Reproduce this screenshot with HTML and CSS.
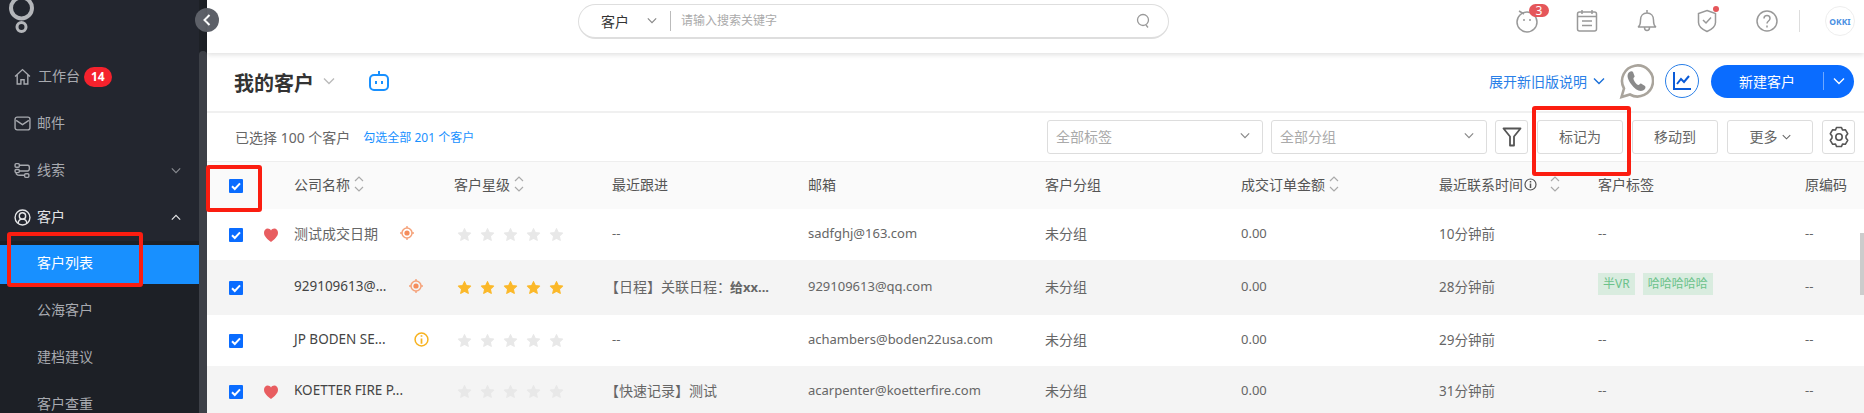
FILE: index.html
```html
<!DOCTYPE html>
<html lang="zh-CN">
<head>
  <meta charset="UTF-8" />
  <title>我的客户</title>
  <meta name="viewport" content="width=device-width, initial-scale=1.0" />
  <link rel="stylesheet" href="styles.css">
</head>
<body>
  <svg class="sprite" aria-hidden="true">
    <symbol id="i-check" viewBox="0 0 14 14">
      <rect width="14" height="14" rx="1" fill="#0a6cff" />
      <path d="M3 7.2l2.8 2.8L11 4.4" fill="none" stroke="#fff" stroke-width="2" />
    </symbol>
    <symbol id="i-star" viewBox="0 0 14 14">
      <path d="M7 1.500l1.700 3.700 4 .5-3 2.800.8 4L7 10.500l-3.500 2 .8-4-3-2.800 4-.5z" stroke-linejoin="round" />
    </symbol>
    <symbol id="i-heart" viewBox="0 0 14 14">
      <path d="M7 14C3.600 11.200 0 8.500 0 4.700 0 2.300 1.700.6 3.700.6 5.100.6 6.300 1.300 7 2.400 7.700 1.300 8.900.6 10.300.6c2 0 3.700 1.700 3.700 4.100 0 3.800-3.600 6.500-7 9.300z" fill="#e85d60" />
    </symbol>
    <symbol id="i-target" viewBox="0 0 14 14">
      <circle cx="7" cy="7" r="5" fill="none" stroke="#f5a27a" stroke-width="1.500" />
      <circle cx="7" cy="7" r="2.600" fill="#f58d5c" />
      <path d="M7 0v2M7 12v2M0 7h2M12 7h2" stroke="#f5a27a" stroke-width="1.400" />
    </symbol>
    <symbol id="i-sort" viewBox="0 0 10 18">
      <path d="M1 6l4-4 4 4M1 12l4 4 4-4" fill="none" stroke="#aaa" stroke-width="1.200" />
    </symbol>
    <symbol id="i-down" viewBox="0 0 12 8">
      <path d="M1 1.500l5 5 5-5" fill="none" stroke="currentColor" stroke-width="1.400" />
    </symbol>
  </svg>

  <div class="app">
    <aside class="sidebar">
      <nav class="nav">
        <div class="logo">
          <svg width="30" height="36" viewBox="0 0 30 36">
            <circle cx="14.500" cy="8" r="10.500" fill="none" stroke="#b4b6ba" stroke-width="4" />
            <circle cx="14.500" cy="27" r="4.500" fill="#23262f" stroke="#b4b6ba" stroke-width="3" />
          </svg>
        </div>
        <a class="nav-item">
          <svg class="nav-icon" viewBox="0 0 16 16"><path d="M1 8l7-6.500L15 8M3 6.500V15h3.500v-4h3v4H13V6.500" /></svg>
          <span class="nav-text nav-text-first">工作台</span>
          <span class="nav-badge">14</span>
        </a>
        <a class="nav-item">
          <svg class="nav-icon" viewBox="0 0 16 16"><rect x="1" y="2" width="14" height="12" rx="2" /><path d="M2 5l6 4 6-4" /></svg>
          <span class="nav-text">邮件</span>
        </a>
        <a class="nav-item">
          <svg class="nav-icon" viewBox="0 0 16 16"><rect x="1" y="1.500" width="4" height="3.500" rx="1" /><rect x="1" y="7" width="4" height="3" rx="1" /><rect x="10" y="11" width="4" height="3.500" rx="1" /><path d="M5 3h8c2 0 2 5 0 5.500H5M10 12.500H5c-2 0-3-1-3-2.500" /></svg>
          <span class="nav-text">线索</span>
          <svg class="nav-arrow"><use href="#i-down" /></svg>
        </a>
        <a class="nav-item nav-item-open">
          <svg class="nav-icon" viewBox="0 0 16 16"><circle cx="8" cy="8" r="7" /><circle cx="8" cy="6.500" r="3" /><path d="M4 13.500c0-3 1.500-4 4-4s4 1 4 4" /></svg>
          <span class="nav-text">客户</span>
          <svg class="nav-arrow nav-arrow-up"><use href="#i-down" /></svg>
        </a>
        <div class="subnav">
          <a class="sub-item sub-item-active">客户列表</a>
          <a class="sub-item">公海客户</a>
          <a class="sub-item">建档建议</a>
          <a class="sub-item">客户查重</a>
        </div>
      </nav>
      <div class="side-scroll"><div class="side-thumb"></div></div>
      <button class="collapse-btn">
        <svg width="8" height="12" viewBox="0 0 8 12"><path d="M6.500 1L1.500 6l5 5" fill="none" stroke="#fff" stroke-width="2" /></svg>
      </button>
    </aside>

    <main class="main">
      <header class="topbar">
        <div class="search">
          <span class="search-type">客户</span>
          <svg class="search-arrow"><use href="#i-down" /></svg>
          <span class="search-input">请输入搜索关键字</span>
          <svg class="search-icon" width="14" height="16" viewBox="0 0 14 16"><circle cx="7" cy="7" r="5.500" fill="none" stroke="#999" stroke-width="1.300" /><path d="M10 12l2 2.500" stroke="#999" stroke-width="1.300" /></svg>
        </div>
        <div class="top-icons">
          <span class="top-icon">
            <svg width="22" height="24" viewBox="0 0 22 24" class="line-icon"><circle cx="11" cy="13" r="10" /><path d="M3 2l5 3M8 10v2M14 10v2" /></svg>
            <span class="top-count">3</span>
          </span>
          <span class="top-icon">
            <svg width="22" height="24" viewBox="0 0 22 24" class="line-icon"><rect x="1.500" y="3" width="19" height="19" rx="2" /><path d="M6 1v4M16 1v4M2 7.500h18M6 12h10M6 16.500h10" /></svg>
          </span>
          <span class="top-icon">
            <svg width="22" height="24" viewBox="0 0 22 24" class="line-icon"><path d="M2 18c2-1 2.500-3 2.500-7 0-4 2.500-7 6.500-7s6.500 3 6.500 7c0 4 .5 6 2.500 7zM11 1v3M8.500 18.500c0 4 5 4 5 0" /></svg>
          </span>
          <span class="top-icon">
            <svg width="22" height="24" viewBox="0 0 22 24" class="line-icon"><path d="M11 1.500l8.500 3v9c0 4-4 7-8.500 9-4.500-2-8.500-5-8.500-9v-9zM7 11l3 3 5-5.500" /></svg>
            <span class="top-dot"></span>
          </span>
          <span class="top-icon">
            <svg width="22" height="24" viewBox="0 0 22 24" class="line-icon"><circle cx="11" cy="12" r="10" /><path d="M8 9.500c0-4 6-4 6 0 0 2.500-3 2.500-3 5M11 16.500v2" /></svg>
          </span>
        </div>
        <span class="top-divider"></span>
        <span class="avatar">OKKI</span>
      </header>

      <section class="title-row">
        <h1 class="page-title">我的客户</h1>
        <svg class="title-arrow"><use href="#i-down" /></svg>
        <svg class="robot" width="22" height="22" viewBox="0 0 22 22"><path d="M11 1v4" stroke="#1890ff" stroke-width="2" /><rect x="2" y="5" width="18" height="15" rx="4" fill="none" stroke="#1890ff" stroke-width="2" /><path d="M8 11v3M14 11v3" stroke="#1890ff" stroke-width="2" /></svg>
        <div class="title-actions">
          <a class="notes-link">展开新旧版说明</a>
          <svg class="notes-arrow"><use href="#i-down" /></svg>
          <svg class="whatsapp" width="35" height="35" viewBox="0 0 35 35">
            <path d="M2.500 33l2.500-8.500A15.500 15.500 0 1 1 11 30.500z" fill="#fff" stroke="#a9a49c" stroke-width="2.600" />
            <path d="M10.500 8c-3 2-2.500 6.500 1.500 12s8.500 8 12 6.500c2.500-1 3-3.500 2-4.500l-4-2.500c-1-.5-1.500 1.500-2.500 1.500-2 0-5.500-5-5-7 .5-1 1.500-1 1-2l-1.500-4c-.5-1-2.500-1-3.500 0z" fill="#8a8a8a" />
          </svg>
          <span class="chart-btn">
            <svg width="20" height="20" viewBox="0 0 20 20"><path d="M2 1v17h17" fill="none" stroke="#0a5bd8" stroke-width="2" /><path d="M5 13l4-5 3 3 5-6" fill="none" stroke="#0a5bd8" stroke-width="2" /></svg>
          </span>
          <div class="new-btn">
            <span class="new-btn-text">新建客户</span>
            <span class="new-btn-line"></span>
            <svg class="new-btn-arrow"><use href="#i-down" /></svg>
          </div>
        </div>
      </section>

      <section class="toolbar">
        <span class="selected">已选择 100 个客户</span>
        <a class="select-all">勾选全部 201 个客户</a>
        <div class="tools">
          <div class="select-box"><span>全部标签</span><svg class="select-arrow"><use href="#i-down" /></svg></div>
          <div class="select-box"><span>全部分组</span><svg class="select-arrow"><use href="#i-down" /></svg></div>
          <button class="tool-square">
            <svg width="20" height="20" viewBox="0 0 20 20"><path d="M1.500 1.500h17l-6.500 8v9H8v-9z" fill="none" stroke="#555" stroke-width="1.800" stroke-linejoin="round" /></svg>
          </button>
          <button class="tool-btn">标记为</button>
          <button class="tool-btn">移动到</button>
          <button class="tool-btn">更多<svg class="more-arrow"><use href="#i-down" /></svg></button>
          <button class="tool-square">
            <svg width="20" height="22" viewBox="0 0 20 22"><path d="M7.500 1.500h5l1 2.500 2.800-.3 2.400 4-1.700 2.300v2l1.700 2.300-2.400 4-2.800-.3-1 2.500h-5l-1-2.500-2.800.3-2.400-4 1.700-2.300v-2L1.300 7.700l2.400-4 2.800.3z" fill="none" stroke="#555" stroke-width="1.600" stroke-linejoin="round" /><circle cx="10" cy="11" r="3.200" fill="none" stroke="#555" stroke-width="1.600" /></svg>
          </button>
        </div>
      </section>

      <section class="table">
        <div class="row row-head">
          <svg class="check"><use href="#i-check" /></svg>
          <span></span>
          <span class="cell">公司名称<svg class="sort"><use href="#i-sort" /></svg></span>
          <span class="cell">客户星级<svg class="sort"><use href="#i-sort" /></svg></span>
          <span class="cell">最近跟进</span>
          <span class="cell">邮箱</span>
          <span class="cell">客户分组</span>
          <span class="cell">成交订单金额<svg class="sort"><use href="#i-sort" /></svg></span>
          <span class="cell">最近联系时间<svg class="info-small" width="13" height="13" viewBox="0 0 13 13"><circle cx="6.500" cy="6.500" r="5.500" fill="none" stroke="#555" stroke-width="1.200" /><path d="M6.500 3v1.500M6.500 5.500V10" stroke="#555" stroke-width="1.500" /></svg><svg class="sort sort-far"><use href="#i-sort" /></svg></span>
          <span class="cell">客户标签</span>
          <span class="cell">原编码</span>
        </div>

        <div class="row">
          <svg class="check"><use href="#i-check" /></svg>
          <svg class="heart"><use href="#i-heart" /></svg>
          <span class="cell company">测试成交日期<svg class="status"><use href="#i-target" /></svg></span>
          <span class="stars"><svg><use href="#i-star" /></svg><svg><use href="#i-star" /></svg><svg><use href="#i-star" /></svg><svg><use href="#i-star" /></svg><svg><use href="#i-star" /></svg></span>
          <span class="cell">--</span>
          <span class="cell">sadfghj@163.com</span>
          <span class="cell cell-cjk">未分组</span>
          <span class="cell">0.00</span>
          <span class="cell cell-time">10分钟前</span>
          <span class="cell">--</span>
          <span class="cell">--</span>
        </div>

        <div class="row row-alt row-tall">
          <svg class="check"><use href="#i-check" /></svg>
          <span></span>
          <span class="cell company company-dark">929109613@...<svg class="status"><use href="#i-target" /></svg></span>
          <span class="stars stars-on"><svg><use href="#i-star" /></svg><svg><use href="#i-star" /></svg><svg><use href="#i-star" /></svg><svg><use href="#i-star" /></svg><svg><use href="#i-star" /></svg></span>
          <span class="cell cell-cjk cell-note">【日程】关联日程：<b>给xx...</b></span>
          <span class="cell">929109613@qq.com</span>
          <span class="cell cell-cjk">未分组</span>
          <span class="cell">0.00</span>
          <span class="cell cell-time">28分钟前</span>
          <span class="cell tags"><span class="tag">半VR</span><span class="tag">哈哈哈哈哈</span></span>
          <span class="cell">--</span>
        </div>

        <div class="row">
          <svg class="check"><use href="#i-check" /></svg>
          <span></span>
          <span class="cell company company-dark">JP BODEN SE...<svg class="status status-info" viewBox="0 0 14 14"><circle cx="7" cy="7" r="6" fill="none" stroke="#f7b21f" stroke-width="1.400" /><path d="M7 3v1.500M7 6v5" stroke="#f7b21f" stroke-width="1.600" /></svg></span>
          <span class="stars"><svg><use href="#i-star" /></svg><svg><use href="#i-star" /></svg><svg><use href="#i-star" /></svg><svg><use href="#i-star" /></svg><svg><use href="#i-star" /></svg></span>
          <span class="cell">--</span>
          <span class="cell">achambers@boden22usa.com</span>
          <span class="cell cell-cjk">未分组</span>
          <span class="cell">0.00</span>
          <span class="cell cell-time">29分钟前</span>
          <span class="cell">--</span>
          <span class="cell">--</span>
        </div>

        <div class="row row-alt">
          <svg class="check"><use href="#i-check" /></svg>
          <svg class="heart"><use href="#i-heart" /></svg>
          <span class="cell company company-dark">KOETTER FIRE P...</span>
          <span class="stars"><svg><use href="#i-star" /></svg><svg><use href="#i-star" /></svg><svg><use href="#i-star" /></svg><svg><use href="#i-star" /></svg><svg><use href="#i-star" /></svg></span>
          <span class="cell cell-cjk cell-note">【快速记录】测试</span>
          <span class="cell">acarpenter@koetterfire.com</span>
          <span class="cell cell-cjk">未分组</span>
          <span class="cell">0.00</span>
          <span class="cell cell-time">31分钟前</span>
          <span class="cell">--</span>
          <span class="cell">--</span>
        </div>
      </section>

      <div class="page-scroll"></div>
    </main>
  </div>

  <div class="mark mark-head-check"></div>
  <div class="mark mark-list"></div>
  <div class="mark mark-action"></div>
</body>
</html>
```

FILE: styles.css
```css
* {
  box-sizing: border-box;
}

html,
body {
  height: 100%;
}

body {
  margin: 0;
  overflow: hidden;
  font-family: "Noto Sans", "Noto Sans CJK SC", sans-serif;
  font-size: 14px;
  color: #666;
  background: #fff;
}

.sprite {
  display: none;
}

.app {
  display: flex;
  height: 413px;
}

/* sidebar */
.sidebar {
  position: relative;
  display: flex;
  flex: 0 0 207px;
  background: #23262f;
}

.nav {
  flex: 0 0 199px;
  overflow: hidden;
}

.logo {
  height: 53px;
  padding: 0 0 0 7px;
  overflow: hidden;
}

.logo svg {
  display: block;
}

.nav-item {
  display: flex;
  align-items: center;
  height: 47px;
  padding-left: 14px;
  color: #a8aab0;
}

.nav-item-open {
  color: #e4e5e7;
}

.nav-icon {
  flex: 0 0 17px;
  width: 17px;
  height: 17px;
  fill: none;
  stroke: currentColor;
  stroke-width: 1.300;
}

.nav-text {
  margin-left: 6px;
  padding-bottom: 3px;
}

.nav-text-first {
  margin-left: 7px;
}

.nav-badge {
  margin-left: 4px;
  padding: 0 7px;
  height: 20px;
  line-height: 20px;
  border-radius: 10px;
  font-size: 12px;
  font-weight: 700;
  color: #fff;
  background: #f5222d;
}

.nav-arrow {
  width: 10px;
  height: 7px;
  margin-left: auto;
  margin-right: 18px;
  color: #888a90;
}

.nav-arrow-up {
  transform: rotate(180deg);
  color: #e4e5e7;
}

.subnav {
  padding-top: 4px;
  background: #1d2026;
}

.sub-item {
  display: block;
  height: 39px;
  margin-bottom: 8px;
  padding-left: 37px;
  line-height: 36px;
  color: #a8aab0;
}

.sub-item-active {
  color: #fff;
  background: #1890ff;
}

.side-scroll {
  flex: 0 0 8px;
  padding-top: 51px;
  background: #1d2026;
}

.side-thumb {
  height: 100%;
  border-radius: 4px 4px 0 0;
  background: #3d4047;
}

.collapse-btn {
  position: absolute;
  top: 8px;
  left: 195px;
  display: flex;
  align-items: center;
  justify-content: center;
  width: 24px;
  height: 24px;
  padding: 0;
  border: 0;
  border-radius: 50%;
  background: #5d6068;
}

/* main column */
.main {
  position: relative;
  flex: 1;
  min-width: 0;
}

.topbar {
  position: relative;
  display: flex;
  align-items: center;
  height: 53px;
  padding: 0 9px 11px 371px;
  box-shadow: 0 2px 5px rgba(0, 0, 0, 0.12);
}

.search {
  display: flex;
  align-items: center;
  width: 591px;
  height: 35px;
  padding: 0 18px 0 22px;
  border: 1px solid #dedede;
  border-bottom-width: 2px;
  border-radius: 18px;
}

.search-type {
  font-size: 14px;
  color: #333;
}

.search-arrow {
  width: 10px;
  height: 7px;
  margin-left: 18px;
  color: #888;
}

.search-input {
  flex: 1;
  margin-left: 13px;
  padding-left: 10px;
  border-left: 1px solid #bbb;
  font-size: 12px;
  line-height: 20px;
  color: #aaa;
}

.top-icons {
  display: flex;
  gap: 38px;
  margin-left: auto;
}

.top-icon {
  position: relative;
  display: block;
  width: 22px;
  height: 24px;
}

.line-icon {
  display: block;
  fill: none;
  stroke: #999;
  stroke-width: 1.500;
}

.top-count {
  position: absolute;
  top: -5px;
  left: 13px;
  width: 20px;
  height: 13px;
  border-radius: 7px;
  font-size: 12px;
  line-height: 13px;
  text-align: center;
  color: #fff;
  background: #e5565a;
}

.top-dot {
  position: absolute;
  top: -3px;
  right: -1px;
  width: 6px;
  height: 6px;
  border-radius: 50%;
  background: #e5565a;
}

.top-divider {
  width: 1px;
  height: 22px;
  margin: 0 25px 0 21px;
  background: #ddd;
}

.avatar {
  display: flex;
  align-items: center;
  justify-content: center;
  width: 30px;
  height: 30px;
  border: 1px solid #eee;
  border-radius: 50%;
  font-size: 8.500px;
  font-weight: 700;
  color: #4a90e2;
}

/* title */
.title-row {
  display: flex;
  align-items: center;
  height: 60px;
  padding: 0 10px 2px 27px;
  border-bottom: 2px solid #f0f0f0;
}

.page-title {
  margin: 2px 0 0;
  font-size: 20px;
  font-weight: 700;
  color: #333;
}

.title-arrow {
  width: 12px;
  height: 8px;
  margin-left: 9px;
  color: #bbb;
}

.robot {
  margin-left: 33px;
}

.title-actions {
  display: flex;
  align-items: center;
  margin-left: auto;
}

.notes-link {
  color: #2a7fe8;
}

.notes-arrow {
  width: 12px;
  height: 8px;
  margin: 0 14px 0 6px;
  color: #1a6fd8;
}

.chart-btn {
  display: flex;
  align-items: center;
  justify-content: center;
  width: 34px;
  height: 34px;
  margin: 0 12px 0 11px;
  border: 1px solid #2a7fe8;
  border-radius: 50%;
}

.new-btn {
  display: flex;
  align-items: center;
  width: 143px;
  height: 33px;
  padding-left: 28px;
  border-radius: 17px;
  color: #fff;
  background: #0a6cff;
}

.new-btn-line {
  width: 1px;
  height: 18px;
  margin-left: 28px;
  background: #6ea8ff;
}

.new-btn-arrow {
  width: 12px;
  height: 8px;
  margin-left: 9px;
}

/* toolbar */
.toolbar {
  display: flex;
  align-items: center;
  height: 49px;
  padding: 0 9px 1px 28px;
  border-bottom: 1px solid #eee;
}

.select-all {
  margin-left: 13px;
  font-size: 12px;
  color: #1890ff;
}

.tools {
  display: flex;
  gap: 9px;
  margin-left: auto;
}

.select-box {
  display: flex;
  align-items: center;
  justify-content: space-between;
  width: 216px;
  height: 34px;
  margin-right: -1px;
  padding: 0 12px 2px 8px;
  border: 1px solid #ddd;
  border-radius: 3px;
  font-size: 14px;
  color: #aaa;
}

.select-arrow {
  width: 10px;
  height: 7px;
  color: #888;
}

.tool-btn,
.tool-square {
  display: flex;
  align-items: center;
  justify-content: center;
  height: 34px;
  padding: 0;
  border: 1px solid #ddd;
  border-radius: 3px;
  font: inherit;
  font-size: 14px;
  color: #666;
  background: #fff;
}

.tool-btn {
  width: 86px;
  padding-bottom: 2px;
}

.tool-square {
  width: 33px;
}

.more-arrow {
  width: 9px;
  height: 6px;
  margin-left: 4px;
  margin-top: 2px;
  color: #666;
}

/* table */
.row {
  display: grid;
  grid-template-columns: 35px 30px 160px 158px 196px 237px 196px 198px 159px 207px 1fr;
  align-items: center;
  height: 51px;
  padding-left: 22px;
}

.row-head {
  height: 47px;
  background: #fafafa;
  color: #555;
}

.row-alt {
  background: #f4f4f4;
}

.row-tall {
  height: 55px;
}

.cell {
  display: flex;
  align-items: center;
  padding-bottom: 3px;
  white-space: nowrap;
  font-size: 13px;
}

.row-head .cell,
.company,
.cell-cjk {
  font-size: 14px;
}

.cell-time {
  font-size: 13.500px;
}

.cell-note {
  margin-left: -7px;
}

.cell b {
  margin-left: -1px;
  font-size: 13px;
  font-weight: 700;
}

.check {
  display: block;
  width: 14px;
  height: 14px;
}

.heart {
  display: block;
  width: 14px;
  height: 14px;
}

.company-dark {
  font-size: 13.500px;
  color: #444;
}

.status {
  width: 14px;
  height: 14px;
  margin-left: 22px;
}

.status-info {
  width: 15px;
  height: 15px;
  margin-left: 28px;
}

.sort {
  width: 10px;
  height: 18px;
  margin-left: 4px;
}

.sort-far {
  margin-left: 13px;
}

.info-small {
  margin-left: 1px;
}

.stars {
  display: flex;
  gap: 8px;
  padding-left: 3px;
  fill: #e8e8e8;
  stroke: #e8e8e8;
  stroke-width: 1;
}

.stars svg {
  width: 15px;
  height: 15px;
}

.stars-on {
  fill: #fbb829;
  stroke: #fbb829;
}

.tags {
  gap: 8px;
  margin-top: -4px;
}

.tag {
  padding: 0 5px;
  height: 22px;
  line-height: 21px;
  font-size: 12px;
  color: #6cc28a;
  background: #d9ecdf;
}

.page-scroll {
  position: absolute;
  top: 233px;
  right: 0;
  width: 4px;
  height: 62px;
  background: #ccc;
}

/* red annotation boxes drawn over the screenshot */
.mark {
  position: absolute;
  border: 4px solid #fb1d10;
  border-radius: 3px;
}

.mark-head-check {
  top: 165px;
  left: 206px;
  width: 56px;
  height: 47px;
}

.mark-list {
  top: 232px;
  left: 7px;
  width: 136px;
  height: 55px;
}

.mark-action {
  top: 106px;
  left: 1532px;
  width: 99px;
  height: 70px;
}
```
